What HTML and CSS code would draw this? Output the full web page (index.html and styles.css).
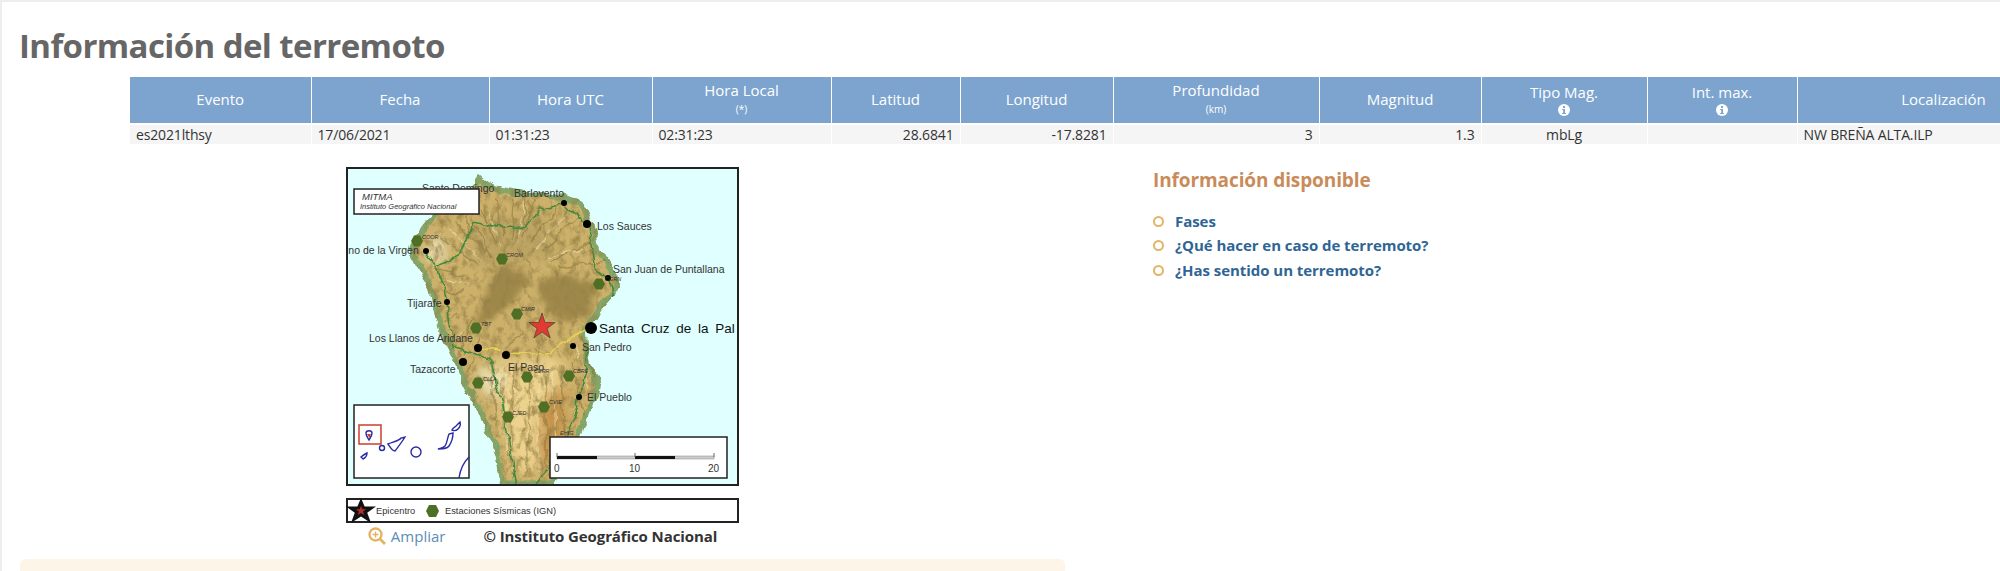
FILE: index.html
```html
<!DOCTYPE html>
<html lang="es">
<head>
    <meta charset="UTF-8">
    <title>Información del terremoto</title>
    <link rel="stylesheet" href="styles.css">
</head>
<body>
<div class="page">
    <h1 class="title">Información del terremoto</h1>

    <table class="quake-table">
        <colgroup>
            <col class="c-evento"><col class="c-fecha"><col class="c-utc"><col class="c-local"><col class="c-lat">
            <col class="c-lon"><col class="c-prof"><col class="c-mag"><col class="c-tipo"><col class="c-int"><col class="c-loc">
        </colgroup>
        <thead>
            <tr>
                <th>Evento</th>
                <th>Fecha</th>
                <th>Hora UTC</th>
                <th>Hora Local<small>(*)</small></th>
                <th>Latitud</th>
                <th>Longitud</th>
                <th>Profundidad<small>(km)</small></th>
                <th>Magnitud</th>
                <th>Tipo Mag.<svg class="info-icon" viewBox="0 0 12 12"><circle cx="6" cy="6" r="6" fill="#fff"/><rect x="5" y="2" width="2" height="2" fill="#7ca4cf"/><path d="M4.200 5h2.800v4h1v1H4.200V9h1V6h-1z" fill="#7ca4cf"/></svg></th>
                <th>Int. max.<svg class="info-icon" viewBox="0 0 12 12"><circle cx="6" cy="6" r="6" fill="#fff"/><rect x="5" y="2" width="2" height="2" fill="#7ca4cf"/><path d="M4.200 5h2.800v4h1v1H4.200V9h1V6h-1z" fill="#7ca4cf"/></svg></th>
                <th>Localización</th>
            </tr>
        </thead>
        <tbody>
            <tr>
                <td>es2021lthsy</td>
                <td>17/06/2021</td>
                <td>01:31:23</td>
                <td>02:31:23</td>
                <td class="num">28.6841</td>
                <td class="num">-17.8281</td>
                <td class="num">3</td>
                <td class="num">1.3</td>
                <td class="mid">mbLg</td>
                <td></td>
                <td>NW BREÑA ALTA.ILP</td>
            </tr>
        </tbody>
    </table>

    <div class="content">
        <div class="left-col">
            <div class="map-block">
                <!-- mapa de La Palma -->
                <svg class="map" viewBox="0 0 393 319">
                    <defs>
                        <clipPath id="islandClip">
                            <path d="M134 8C142 16 150 20 157 21S176 26 184 25 208 25 217 28 233 31 237 36 244 48 247 56 251 72 254 80 262 96 267 103 274 110 274 116 266 130 261 136 252 148 247 156 241 160 241 166 243 182 244 193 252 206 254 216 251 232 247 240 241 256 237 266 215 305 207 319H154C152 305 150 295 147 283S136 255 131 243 122 228 117 216 110 200 104 186 95 170 91 156 87 140 84 126 76 112 71 100 64 90 64 83 68 72 72 65 78 56 84 50 98 38 107 30 118 24 124 20 130 12 134 8Z"/>
                        </clipPath>
                        <filter id="soft" x="-20%" y="-20%" width="140%" height="140%"><feGaussianBlur stdDeviation="6"/></filter>
                        <filter id="softer" x="-20%" y="-20%" width="140%" height="140%"><feGaussianBlur stdDeviation="3"/></filter>
                        <filter id="rough" x="-5%" y="-5%" width="110%" height="110%">
                            <feTurbulence type="fractalNoise" baseFrequency="0.07" numOctaves="3" seed="4" result="n"/>
                            <feDisplacementMap in="SourceGraphic" in2="n" scale="9" xChannelSelector="R" yChannelSelector="G"/>
                        </filter>
                        <filter id="ridges" x="0" y="0" width="100%" height="100%">
                            <feTurbulence type="fractalNoise" baseFrequency="0.16 0.1" numOctaves="4" seed="7"/>
                            <feColorMatrix type="matrix" values="0 0 0 0 0.3  0 0 0 0 0.22  0 0 0 0 0.06  2.200 0 0 0 -0.980"/>
                        </filter>
                    </defs>

                    <rect width="393" height="319" fill="#e0ffff"/>

                    <g filter="url(#rough)">
                        <g clip-path="url(#islandClip)">
                            <rect width="393" height="319" fill="#cdb16b"/>
                            <g filter="url(#soft)">
                                <path d="M150 195 215 190 218 240 196 305 170 305 152 240Z" fill="#ecd28c"/>
                                <path d="M195 235 222 215 214 285 192 312Z" fill="#c8934a"/>
                                <circle cx="146" cy="214" r="14" fill="#ebe2b2"/>
                                <circle cx="90" cy="84" r="10" fill="#f0e8c4"/>
                                <path d="M135 50 200 50 210 90 165 95 125 95Z" fill="#bda463"/>
                            </g>
                            <g class="caldera" filter="url(#softer)">
                                <path d="M127 160 151 100 161 96 184 110 164 140 141 153Z"/>
                                <path d="M191 116 214 106 251 116 244 150 217 153 197 140Z"/>
                            </g>
                            <path class="coast" d="M134 8C142 16 150 20 157 21S176 26 184 25 208 25 217 28 233 31 237 36 244 48 247 56 251 72 254 80 262 96 267 103 274 110 274 116 266 130 261 136 252 148 247 156 241 160 241 166 243 182 244 193 252 206 254 216 251 232 247 240 241 256 237 266 215 305 207 319H154C152 305 150 295 147 283S136 255 131 243 122 228 117 216 110 200 104 186 95 170 91 156 87 140 84 126 76 112 71 100 64 90 64 83 68 72 72 65 78 56 84 50 98 38 107 30 118 24 124 20 130 12 134 8Z"/>
                            <path class="ridge-dark" d="M150 75 135 42M158 70 150 32M166 72 168 30M175 72 190 33M185 75 212 38M195 85 232 50M205 95 245 75M212 100 258 95M140 85 110 55M130 95 95 72M122 110 90 102M118 125 95 125M112 145 98 155M125 70 118 40M178 60 180 32M146 92 128 60M168 200 165 300M185 205 180 310M200 205 200 300M215 200 218 285M225 195 238 250M155 215 163 290M145 200 150 260M235 170 248 210M128 150 112 190M135 170 122 205M176 165 160 180M195 175 190 195"/>
                            <path class="ridge-light" d="M155 78 142 45M172 75 178 35M190 82 222 45M135 92 102 62M125 118 92 112M160 205 160 285M192 205 192 305M208 205 210 290M230 180 243 225M120 160 108 175M203 90 240 82"/>
                            <rect width="393" height="319" filter="url(#ridges)"/>
                            <path class="road-yellow" d="M244 161 227 170 201 188 165 186 134 181"/>
                            <path class="road" d="M218 36 194 43 191 50 176 61 162 58 147 61 127 55 122 72 114 86 91 99 80 84M91 99 101 135 107 180 125 186 144 193 150 215 157 240 171 319"/>
                            <path class="road" d="M218 36 241 57 247 85 250 100 262 111 268 128 245 161 241 193 231 240 214 283 189 319"/>
                        </g>
                    </g>

                    <text class="place" x="76" y="25">Santo Domingo</text>
                    <rect class="panel" x="8" y="22" width="125" height="25"/>
                    <text class="logo-a" x="16" y="33">MITMA</text>
                    <text class="logo-b" x="14" y="42">Instituto Geográfico Nacional</text>

                    <g class="dots">
                        <circle cx="218" cy="36" r="3"/><circle cx="241" cy="57" r="4"/><circle cx="262" cy="111" r="3"/>
                        <circle cx="80" cy="84" r="3"/><circle cx="101" cy="135" r="3"/><circle cx="245" cy="161" r="6"/>
                        <circle cx="227" cy="179" r="3"/><circle cx="132" cy="181" r="4"/><circle cx="160" cy="188" r="4"/>
                        <circle cx="117" cy="195" r="4"/><circle cx="233" cy="230" r="3"/>
                    </g>

                    <text class="place" x="168" y="30">Barlovento</text>
                    <text class="place" x="251" y="63">Los Sauces</text>
                    <text class="place" x="267" y="106">San Juan de Puntallana</text>
                    <text class="place" x="0" y="87">ino de la Virgen</text>
                    <text class="place" x="61" y="140">Tijarafe</text>
                    <text class="place" x="23" y="175">Los Llanos de Aridane</text>
                    <text class="place" x="64" y="206">Tazacorte</text>
                    <text class="place" x="162" y="204">El Paso</text>
                    <text class="place" x="236" y="184">San Pedro</text>
                    <text class="place" x="241" y="234">El Pueblo</text>
                    <text class="capital" x="253" y="166">Santa Cruz de la Pal</text>

                    <g class="stations">
                        <path d="M65 74l3-5.500h6l3 5.500-3 5.500h-6z"/><path d="M150 92l3-5.500h6l3 5.500-3 5.500h-6z"/>
                        <path d="M247 117l3-5.500h6l3 5.500-3 5.500h-6z"/><path d="M165 147l3-5.500h6l3 5.500-3 5.500h-6z"/>
                        <path d="M124 161l3-5.500h6l3 5.500-3 5.500h-6z"/><path d="M126 216l3-5.500h6l3 5.500-3 5.500h-6z"/>
                        <path d="M175 210l3-5.500h6l3 5.500-3 5.500h-6z"/><path d="M217 209l3-5.500h6l3 5.500-3 5.500h-6z"/>
                        <path d="M192 240l3-5.500h6l3 5.500-3 5.500h-6z"/><path d="M156 250l3-5.500h6l3 5.500-3 5.500h-6z"/>
                    </g>
                    <text class="code" x="76" y="72">COOR</text>
                    <text class="code" x="160" y="90">CROM</text>
                    <text class="code" x="259" y="114">CGRN</text>
                    <text class="code" x="175" y="144">CMIR</text>
                    <text class="code" x="135" y="159">TBT</text>
                    <text class="code" x="137" y="214">CLLA</text>
                    <text class="code" x="188" y="206">CERR</text>
                    <text class="code" x="227" y="206">CBRE</text>
                    <text class="code" x="203" y="237">CVIE</text>
                    <text class="code" x="166" y="248">CJED</text>
                    <text class="code" x="214" y="268">EHIG</text>

                    <path class="star" d="M196 146l3.100 9.500h10l-8.100 5.900 3.100 9.500-8.100-5.900-8.100 5.900 3.100-9.500-8.100-5.900h10z"/>

                    <!-- recuadro Canarias -->
                    <rect class="panel" x="8" y="238" width="115" height="73"/>
                    <rect class="inset-frame" x="13" y="258" width="22" height="19"/>
                    <g class="isles">
                        <path d="M20 266C20 263 26 263 26 266S24 271 23 273C22 271 20 269 20 266Z"/>
                        <circle cx="36" cy="281" r="2.500"/>
                        <path d="M42 277C47 275 53 274 55 271L59 270C56 275 52 280 49 284 46 284 44 280 42 277Z"/>
                        <path d="M15 290C17 288 19 287 21 286 21 289 19 291 17 292Z"/>
                        <circle cx="70" cy="285" r="5"/>
                        <path d="M92 282C95 281 97 281 99 279S101 272 103 267L107 266C107 271 105 276 103 279S97 282 92 282Z"/>
                        <path d="M106 263C107 260 110 260 111 258L114 255C115 258 114 260 112 262S108 264 106 263Z"/>
                        <path d="M113 311C114 304 117 296 123 290"/>
                    </g>
                    <path d="M21 267h4l-1.500 4z" fill="#c8403a"/>

                    <!-- escala -->
                    <rect class="panel" x="204" y="270" width="177" height="41"/>
                    <rect x="211" y="289" width="157" height="3" fill="#ccc" stroke="#888" stroke-width=".5"/>
                    <rect x="211" y="289" width="40" height="3" fill="#111"/>
                    <rect x="289" y="289" width="40" height="3" fill="#111"/>
                    <path d="M211 286v4M289 286v4M368 286v4" stroke="#666" fill="none"/>
                    <text class="scale" x="208" y="305">0</text>
                    <text class="scale" x="283" y="305">10</text>
                    <text class="scale" x="362" y="305">20</text>

                    <rect class="map-frame" x="1" y="1" width="391" height="317"/>
                </svg>

                <svg class="legend" viewBox="0 0 393 25">
                    <rect class="map-frame" x="1" y="1" width="391" height="23"/>
                    <path d="M15 0l3.600 8.500h11.400l-8.800 6.200 3.800 10.300-10-6.600-10 6.600 3.800-10.300-8.800-6.200h11.400z" fill="#111"/>
                    <path d="M15 8l1.400 3.300h3.600l-2.900 2.200 1.100 3.500-3.200-2.100-3.200 2.100 1.100-3.500-2.900-2.200h3.600z" fill="#b3302c"/>
                    <text class="legend-text" x="30" y="16">Epicentro</text>
                    <path d="M80 13l3-6h7l3 6-3 6h-7z" fill="#4f6f24"/>
                    <text class="legend-text" x="99" y="16">Estaciones Sísmicas (IGN)</text>
                </svg>

                <div class="map-caption">
                    <a class="zoom-link" href="#">
                        <svg class="zoom-icon" viewBox="0 0 18 18"><circle cx="7.500" cy="7.500" r="6" fill="none" stroke="#e2b566" stroke-width="2.400"/><path d="M12 12l5 5" stroke="#e2b566" stroke-width="2.800"/><path d="M7.500 4.500v6M4.500 7.500h6" stroke="#e2b566" stroke-width="1.500"/></svg>
                        Ampliar
                    </a>
                    <span class="copy">© Instituto Geográfico Nacional</span>
                </div>
            </div>
            <div class="notice"></div>
        </div>

        <div class="right-col">
            <h2 class="side-title">Información disponible</h2>
            <ul class="side-list">
                <li><a href="#">Fases</a></li>
                <li><a href="#">¿Qué hacer en caso de terremoto?</a></li>
                <li><a href="#">¿Has sentido un terremoto?</a></li>
            </ul>
        </div>
    </div>
</div>
</body>
</html>
```

FILE: styles.css
```css
html, body {
    margin: 0;
    padding: 0;
    height: 100%;
    overflow: hidden;
    background-color: #fff;
}

.page {
    box-sizing: border-box;
    height: 571px;
    overflow: hidden;
    border-top: 2px solid #eee;
    border-left: 2px solid #eee;
    padding: 0 0 0 18px;
    font-family: "Open Sans", sans-serif;
    color: #333;
}

.title {
    margin: 0 0 0 -1px;
    padding-top: 22px;
    height: 53px;
    font-size: 33px;
    line-height: 44px;
    letter-spacing: -0.6px;
    font-weight: 700;
    color: #666;
}

/* tabla */
.quake-table {
    margin-left: 110px;
    width: 1960px;
    table-layout: fixed;
    border-collapse: collapse;
    font-size: 14px;
    letter-spacing: -0.15px;
}

.c-evento { width: 181px; }
.c-fecha { width: 178px; }
.c-utc { width: 163px; }
.c-local { width: 179px; }
.c-lat { width: 129px; }
.c-lon { width: 153px; }
.c-prof { width: 206px; }
.c-mag { width: 162px; }
.c-tipo { width: 166px; }
.c-int { width: 150px; }
.c-loc { width: 293px; }

.quake-table th {
    height: 43px;
    padding: 0 6px 3px;
    background-color: #7ca4cf;
    border-right: 1px solid #fff;
    border-bottom: 2px solid #fff;
    color: #fff;
    font-size: 15px;
    line-height: 20px;
    font-weight: 400;
    letter-spacing: 0;
    text-align: center;
}

.quake-table th small {
    display: block;
    font-size: 10px;
    line-height: 18px;
}

.info-icon {
    display: block;
    width: 12px;
    height: 12px;
    margin: 2px auto 0;
}

.quake-table td {
    height: 19px;
    padding: 0 6px;
    background-color: #f5f5f5;
    border-right: 1px solid #fff;
    line-height: 19px;
}

.quake-table td.num { text-align: right; }
.quake-table td.mid { text-align: center; }

/* contenido */
.content {
    display: flex;
    margin-top: 23px;
}

.left-col {
    width: 1045px;
}

.map-block {
    display: flex;
    flex-direction: column;
    align-items: center;
}

.map {
    display: block;
    width: 393px;
    height: 319px;
}

.legend {
    display: block;
    width: 393px;
    height: 25px;
    margin-top: 12px;
}

.map-frame {
    fill: none;
    stroke: #222;
    stroke-width: 2;
}

.panel {
    fill: #fff;
    stroke: #222;
    stroke-width: 1.5;
}

.road, .road-yellow, .coast, .ridge-dark, .ridge-light, .isles path, .isles circle {
    fill: none;
}

.caldera path {
    fill: #8f7a3e;
    opacity: 0.75;
}

.coast {
    stroke: #76a468;
    stroke-width: 11;
    opacity: 0.85;
}

.ridge-dark {
    stroke: #5f4c22;
    stroke-width: 1.4;
    opacity: 0.35;
}

.ridge-light {
    stroke: #f3e8bc;
    stroke-width: 1.4;
    opacity: 0.55;
}

.road {
    stroke: #3e8a3c;
    stroke-width: 1.5;
}

.road-yellow {
    stroke: #e5d650;
    stroke-width: 1.5;
}

.dots circle { fill: #000; }
.stations path { fill: #4f6f24; }

.star {
    fill: #e03a32;
    stroke: #333;
    stroke-width: 0.6;
}

.place, .capital, .scale, .logo-a, .logo-b, .code, .legend-text {
    font-family: "Liberation Sans", Arial, sans-serif;
    fill: #333;
}

.place { font-size: 10.5px; }
.capital { font-size: 13.500px; word-spacing: 3px; fill: #111; }
.scale { font-size: 10px; }
.logo-a { font-size: 9.500px; font-style: italic; }
.logo-b { font-size: 7.500px; font-style: italic; }
.code { font-size: 5.500px; font-style: italic; }
.legend-text { font-size: 9.300px; }

.inset-frame {
    fill: none;
    stroke: #c8402f;
    stroke-width: 1.500;
}

.isles path, .isles circle {
    stroke: #2a2aa5;
    stroke-width: 1.400;
}

.map-caption {
    display: flex;
    align-items: center;
    gap: 38px;
    height: 28px;
    margin-top: -1px;
    padding-bottom: 1px;
    font-size: 15px;
}

.zoom-link {
    display: flex;
    align-items: center;
    gap: 5px;
    color: #5b8db5;
    text-decoration: none;
}

.zoom-icon {
    width: 18px;
    height: 18px;
}

.copy {
    font-weight: 700;
    letter-spacing: -0.1px;
    color: #333;
}

.notice {
    height: 60px;
    margin-top: 8px;
    background-color: #fdf6e8;
    border-radius: 6px;
}

/* columna derecha */
.right-col {
    margin-left: 88px;
}

.side-title {
    margin: 0 0 16px;
    font-size: 19px;
    line-height: 26px;
    letter-spacing: -0.1px;
    font-weight: 700;
    color: #c98b5a;
}

.side-list {
    margin: 0;
    padding: 0;
    list-style: none;
}

.side-list li {
    position: relative;
    padding-left: 22px;
    font-size: 15px;
    line-height: 24.300px;
    letter-spacing: -0.05px;
}

.side-list li::before {
    content: "";
    position: absolute;
    left: 0;
    top: 7px;
    width: 7px;
    height: 7px;
    border: 2px solid #e2b566;
    border-radius: 50%;
}

.side-list a {
    color: #2f6594;
    font-weight: 700;
    text-decoration: none;
}
```
